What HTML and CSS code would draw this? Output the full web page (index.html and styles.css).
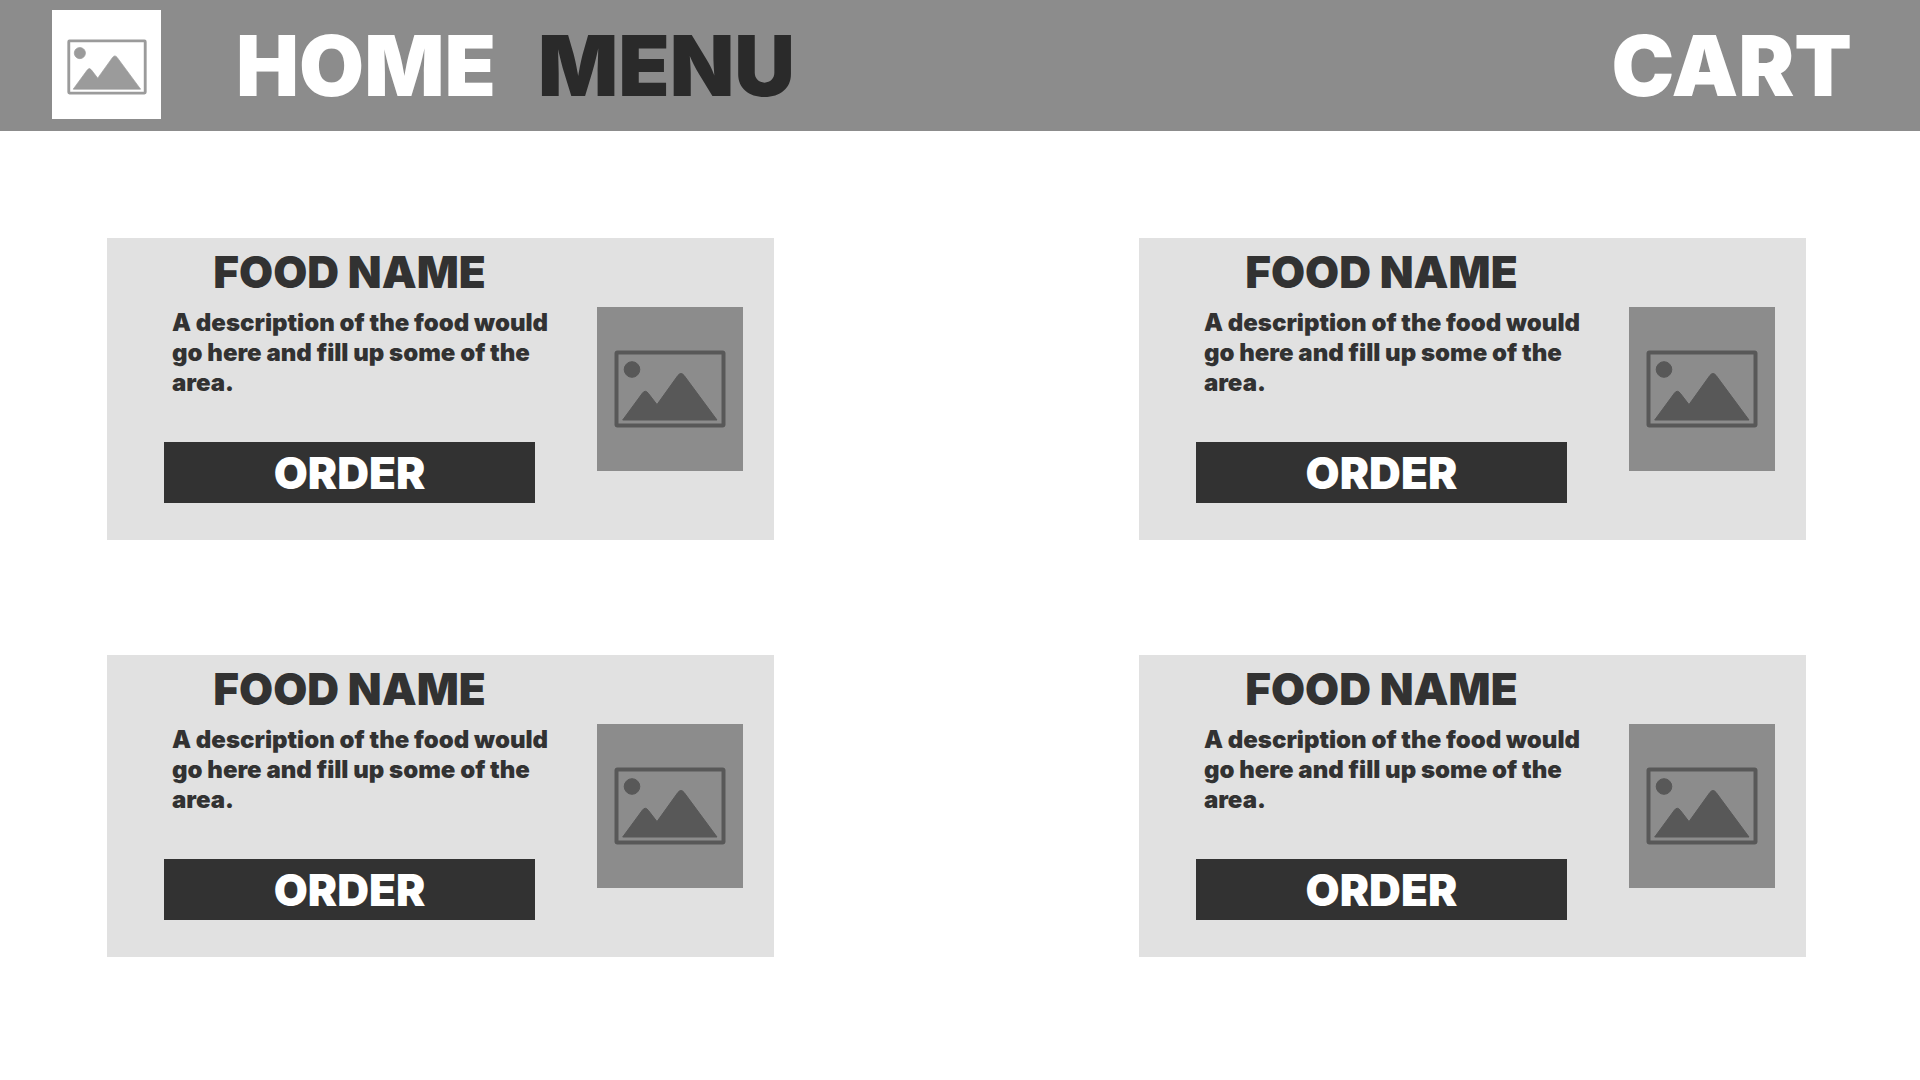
FILE: index.html
```
<!DOCTYPE html>
<html lang="en">
<head>
<meta charset="utf-8">
<meta name="viewport" content="width=device-width, initial-scale=1">
<title>Menu</title>
<link rel="stylesheet" href="styles.css">
</head>
<body>
<svg class="sprite" aria-hidden="true">
  <symbol id="picture" viewBox="0 0 112 78">
    <rect class="frame" x="2.5" y="2.5" width="107" height="73" rx="1"/>
    <circle class="shape" cx="18" cy="19.5" r="7.8"/>
    <path class="shape" d="M8.7 70 L28.3 43.3 Q31.3 39.2 34.3 43.3 L43 54.6 L63.8 25.6 Q67 21.4 70.2 25.6 L103 70 Z"/>
  </symbol>
</svg>
<header class="topbar">
  <a class="logo" href="#" aria-label="Home page"><svg class="logo-icon"><use href="#picture"/></svg></a>
  <nav class="nav">
    <a class="nav-link" href="#">HOME</a>
    <a class="nav-link current" href="#" aria-current="page">MENU</a>
    <a class="nav-link cart" href="#">CART</a>
  </nav>
</header>
<main class="menu">
  <article class="card">
    <div class="info">
      <h2 class="name">FOOD NAME</h2>
      <p class="description">A description of the food would go here and fill up some of the area.</p>
      <button class="order" type="button">ORDER</button>
    </div>
    <div class="photo"><svg class="photo-icon"><use href="#picture"/></svg></div>
  </article>
  <article class="card">
    <div class="info">
      <h2 class="name">FOOD NAME</h2>
      <p class="description">A description of the food would go here and fill up some of the area.</p>
      <button class="order" type="button">ORDER</button>
    </div>
    <div class="photo"><svg class="photo-icon"><use href="#picture"/></svg></div>
  </article>
  <article class="card">
    <div class="info">
      <h2 class="name">FOOD NAME</h2>
      <p class="description">A description of the food would go here and fill up some of the area.</p>
      <button class="order" type="button">ORDER</button>
    </div>
    <div class="photo"><svg class="photo-icon"><use href="#picture"/></svg></div>
  </article>
  <article class="card">
    <div class="info">
      <h2 class="name">FOOD NAME</h2>
      <p class="description">A description of the food would go here and fill up some of the area.</p>
      <button class="order" type="button">ORDER</button>
    </div>
    <div class="photo"><svg class="photo-icon"><use href="#picture"/></svg></div>
  </article>
</main>
</body>
</html>
```
FILE: styles.css
```
* {
  box-sizing: border-box;
}

body {
  margin: 0;
  background: #fff;
  color: #323232;
  font-family: "Franklin Gothic Heavy", Inter, "Liberation Sans", sans-serif;
  font-weight: 900;
}

.sprite {
  display: none;
}

.frame {
  fill: none;
  stroke: currentColor;
  stroke-width: 4;
}

.shape {
  fill: currentColor;
  stroke: currentColor;
  stroke-width: 1;
  stroke-linejoin: round;
}

.topbar {
  display: flex;
  align-items: center;
  padding: 10px 68px 12px 52px;
  background: #8c8c8c;
}

.logo {
  display: flex;
  flex: none;
  align-items: center;
  justify-content: center;
  width: 109px;
  height: 109px;
  padding-top: 4px;
  background: #fff;
  color: #9b9b9b;
}

.logo-icon {
  width: 80px;
  height: 56px;
}

.nav {
  display: flex;
  flex: 1;
  gap: 42px;
  margin-left: 75px;
  padding-top: 2px;
}

.nav-link {
  color: #fff;
  font-size: 84px;
  line-height: 100px;
  text-decoration: none;
}

.nav-link.current {
  color: #2a2a2a;
}

.nav-link.cart {
  margin-left: auto;
}

.menu {
  display: grid;
  grid-template-columns: 1fr 1fr;
  gap: 115px 19vw;
  padding: 107px 114px 107px 107px;
}

.card {
  display: flex;
  align-items: flex-start;
  gap: 62px;
  padding: 10px 31px 37px 57px;
  background: #e1e1e1;
}

.info {
  display: flex;
  flex: 1;
  flex-direction: column;
}

.name {
  margin: 0;
  font-size: 44px;
  font-weight: 900;
  line-height: 48px;
  text-align: center;
}

.description {
  margin: 12px -16px 44px 8px;
  font-size: 24px;
  line-height: 30px;
}

.order {
  height: 61px;
  padding: 0;
  border: 0;
  background: #323232;
  color: #fff;
  font: inherit;
  font-size: 44px;
  line-height: 60px;
}

.photo {
  display: flex;
  flex: none;
  align-items: center;
  justify-content: center;
  width: 146px;
  height: 164px;
  margin-top: 59px;
  background: #8c8c8c;
  color: #585858;
}

.photo-icon {
  width: 112px;
  height: 78px;
}
```
